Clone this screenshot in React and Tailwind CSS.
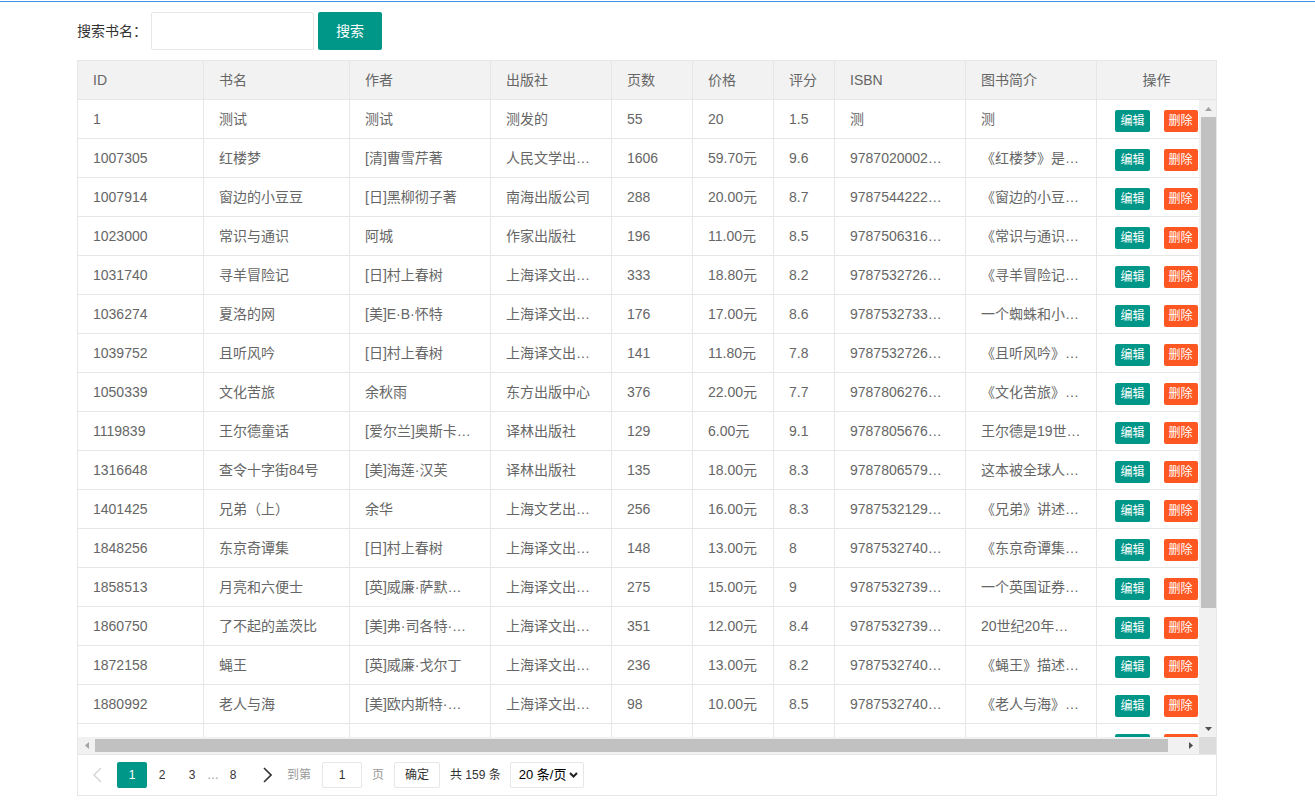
import { useState } from "react";

const columns = [
  { key: "id", title: "ID", width: "w-[126px]" },
  { key: "name", title: "书名", width: "w-[146px]" },
  { key: "author", title: "作者", width: "w-[141px]" },
  { key: "press", title: "出版社", width: "w-[121px]" },
  { key: "pages", title: "页数", width: "w-[81px]" },
  { key: "price", title: "价格", width: "w-[81px]" },
  { key: "rate", title: "评分", width: "w-[61px]" },
  { key: "isbn", title: "ISBN", width: "w-[131px]" },
  { key: "intro", title: "图书简介", width: "w-[131px]" },
];

const books = [
  ["1", "测试", "测试", "测发的", "55", "20", "1.5", "测", "测"],
  ["1007305", "红楼梦", "[清]曹雪芹著", "人民文学出…", "1606", "59.70元", "9.6", "9787020002…", "《红楼梦》是…"],
  ["1007914", "窗边的小豆豆", "[日]黑柳彻子著", "南海出版公司", "288", "20.00元", "8.7", "9787544222…", "《窗边的小豆…"],
  ["1023000", "常识与通识", "阿城", "作家出版社", "196", "11.00元", "8.5", "9787506316…", "《常识与通识…"],
  ["1031740", "寻羊冒险记", "[日]村上春树", "上海译文出…", "333", "18.80元", "8.2", "9787532726…", "《寻羊冒险记…"],
  ["1036274", "夏洛的网", "[美]E·B·怀特", "上海译文出…", "176", "17.00元", "8.6", "9787532733…", "一个蜘蛛和小…"],
  ["1039752", "且听风吟", "[日]村上春树", "上海译文出…", "141", "11.80元", "7.8", "9787532726…", "《且听风吟》…"],
  ["1050339", "文化苦旅", "余秋雨", "东方出版中心", "376", "22.00元", "7.7", "9787806276…", "《文化苦旅》…"],
  ["1119839", "王尔德童话", "[爱尔兰]奥斯卡…", "译林出版社", "129", "6.00元", "9.1", "9787805676…", "王尔德是19世…"],
  ["1316648", "查令十字街84号", "[美]海莲·汉芙", "译林出版社", "135", "18.00元", "8.3", "9787806579…", "这本被全球人…"],
  ["1401425", "兄弟（上）", "余华", "上海文艺出…", "256", "16.00元", "8.3", "9787532129…", "《兄弟》讲述…"],
  ["1848256", "东京奇谭集", "[日]村上春树", "上海译文出…", "148", "13.00元", "8", "9787532740…", "《东京奇谭集…"],
  ["1858513", "月亮和六便士", "[英]威廉·萨默…", "上海译文出…", "275", "15.00元", "9", "9787532739…", "一个英国证券…"],
  ["1860750", "了不起的盖茨比", "[美]弗·司各特·…", "上海译文出…", "351", "12.00元", "8.4", "9787532739…", "20世纪20年…"],
  ["1872158", "蝇王", "[英]威廉·戈尔丁", "上海译文出…", "236", "13.00元", "8.2", "9787532740…", "《蝇王》描述…"],
  ["1880992", "老人与海", "[美]欧内斯特·…", "上海译文出…", "98", "10.00元", "8.5", "9787532740…", "《老人与海》…"],
  // next row is only partly shown under the scrollbar
  ["", "", "", "", "", "", "", "", ""],
];

const Triangle = ({ dir, color }) => {
  const points = {
    up: "0,4 3.5,0 7,4",
    down: "0,0 7,0 3.5,4",
    left: "4,0 4,7 0,3.5",
    right: "0,0 4,3.5 0,7",
  }[dir];
  const vertical = dir === "up" || dir === "down";
  return (
    <svg width={vertical ? 7 : 4} height={vertical ? 4 : 7} viewBox={vertical ? "0 0 7 4" : "0 0 4 7"}>
      <polygon points={points} fill={color} />
    </svg>
  );
};

const App = () => {
  const [keyword, setKeyword] = useState("");

  return (
    <div className="min-h-[803px] bg-white font-['Liberation_Sans','Noto_Sans_CJK_SC',sans-serif] text-sm text-[#666]">
      <div className="h-px bg-white" />
      <div className="h-px bg-[#3f92df]" />

      <div className="ml-[77px] w-[1140px]">
        {/* search */}
        <div className="mt-[10px] flex h-[38px] items-center">
          <span className="text-[#333]">搜索书名：</span>
          <input
            value={keyword}
            onChange={(e) => setKeyword(e.target.value)}
            className="ml-[4px] h-[38px] w-[163px] rounded-[2px] border border-[#e6e6e6] px-[10px] outline-none"
          />
          <button className="ml-[4px] h-[38px] w-[64px] rounded-[2px] bg-[#009688] text-white">
            搜索
          </button>
        </div>

        {/* table */}
        <div className="mt-[10px] border border-[#e6e6e6]">
          <div className="flex h-[39px] border-b border-[#e6e6e6] bg-[#f2f2f2] leading-[38px]">
            {columns.map((col) => (
              <div
                key={col.key}
                className={`${col.width} shrink-0 border-r border-[#e6e6e6] px-[15px] whitespace-nowrap`}
              >
                {col.title}
              </div>
            ))}
            <div className="w-[119px] shrink-0 text-center">操作</div>
          </div>

          <div className="flex h-[637px]">
            <div className="min-w-0 flex-1 overflow-hidden">
              {books.map((row, i) => (
                <div key={i} className="flex h-[39px] w-[1138px] border-b border-[#e6e6e6] leading-[38px]">
                  {columns.map((col, j) => (
                    <div
                      key={col.key}
                      className={`${col.width} shrink-0 overflow-hidden border-r border-[#e6e6e6] px-[15px] whitespace-nowrap`}
                    >
                      {row[j]}
                    </div>
                  ))}
                  <div className="flex w-[119px] shrink-0 justify-center gap-[14px] pt-[10px]">
                    <button className="h-[22px] rounded-[2px] bg-[#009688] px-[5px] text-xs leading-[22px] text-white">
                      编辑
                    </button>
                    <button className="h-[22px] rounded-[2px] bg-[#ff5722] px-[5px] text-xs leading-[22px] text-white">
                      删除
                    </button>
                  </div>
                </div>
              ))}
            </div>
            {/* vertical scrollbar */}
            <div className="flex w-[17px] shrink-0 flex-col bg-[#f1f1f1]">
              <div className="flex h-[17px] items-center justify-center pl-[1px]">
                <Triangle dir="up" color="#a3a3a3" />
              </div>
              <div className="flex-1 pl-[2px]">
                <div className="h-[491px] bg-[#c1c1c1]" />
              </div>
              <div className="flex h-[17px] items-center justify-center pl-[1px]">
                <Triangle dir="down" color="#505050" />
              </div>
            </div>
          </div>

          {/* horizontal scrollbar */}
          <div className="flex h-[17px]">
            <div className="flex flex-1 bg-[#f1f1f1]">
              <div className="flex w-[17px] items-center justify-center">
                <Triangle dir="left" color="#a3a3a3" />
              </div>
              <div className="flex-1 pt-[2px] pb-[2px]">
                <div className="h-full w-[1073px] bg-[#c1c1c1]" />
              </div>
              <div className="flex w-[17px] items-center justify-center">
                <Triangle dir="right" color="#505050" />
              </div>
            </div>
            <div className="w-[17px] bg-[#dcdcdc]" />
          </div>

          {/* pagination */}
          <div className="flex h-[41px] items-center border-t border-[#e6e6e6] text-xs text-[#333]">
            <div className="flex w-[39px] justify-center">
              <svg width="9" height="16" viewBox="0 0 9 16">
                <polyline points="8,1 1,8 8,15" fill="none" stroke="#d2d2d2" strokeWidth="1.3" />
              </svg>
            </div>
            <div className="h-[26px] w-[30px] rounded-[2px] bg-[#009688] text-center leading-[26px] text-white">1</div>
            <div className="w-[30px] text-center">2</div>
            <div className="w-[30px] text-center">3</div>
            <div className="w-[11px] text-center text-[#999]">…</div>
            <div className="w-[30px] text-center">8</div>
            <div className="flex w-[39px] justify-center">
              <svg width="9" height="16" viewBox="0 0 9 16">
                <polyline points="1,1 8,8 1,15" fill="none" stroke="#333" strokeWidth="1.6" />
              </svg>
            </div>
            <span className="text-[#999]">到第</span>
            <div className="ml-[11px] h-[26px] w-[40px] rounded-[2px] border border-[#e6e6e6] text-center leading-[24px]">
              1
            </div>
            <span className="ml-[10px] text-[#999]">页</span>
            <button className="ml-[10px] h-[26px] w-[46px] rounded-[2px] border border-[#e6e6e6] bg-white text-[#333]">
              确定
            </button>
            <span className="ml-[10px]">共 159 条</span>
            <div className="ml-[9px] flex h-[26px] w-[74px] items-center justify-between rounded-[2px] border border-[#e6e6e6] pr-[5px] pl-[8px] text-[13px] text-black">
              <span>20 条/页</span>
              <svg width="9" height="6" viewBox="0 0 9 6">
                <polyline points="1,1 4.5,4.5 8,1" fill="none" stroke="#222" strokeWidth="2" />
              </svg>
            </div>
          </div>
        </div>
      </div>
    </div>
  );
};

export default App;
